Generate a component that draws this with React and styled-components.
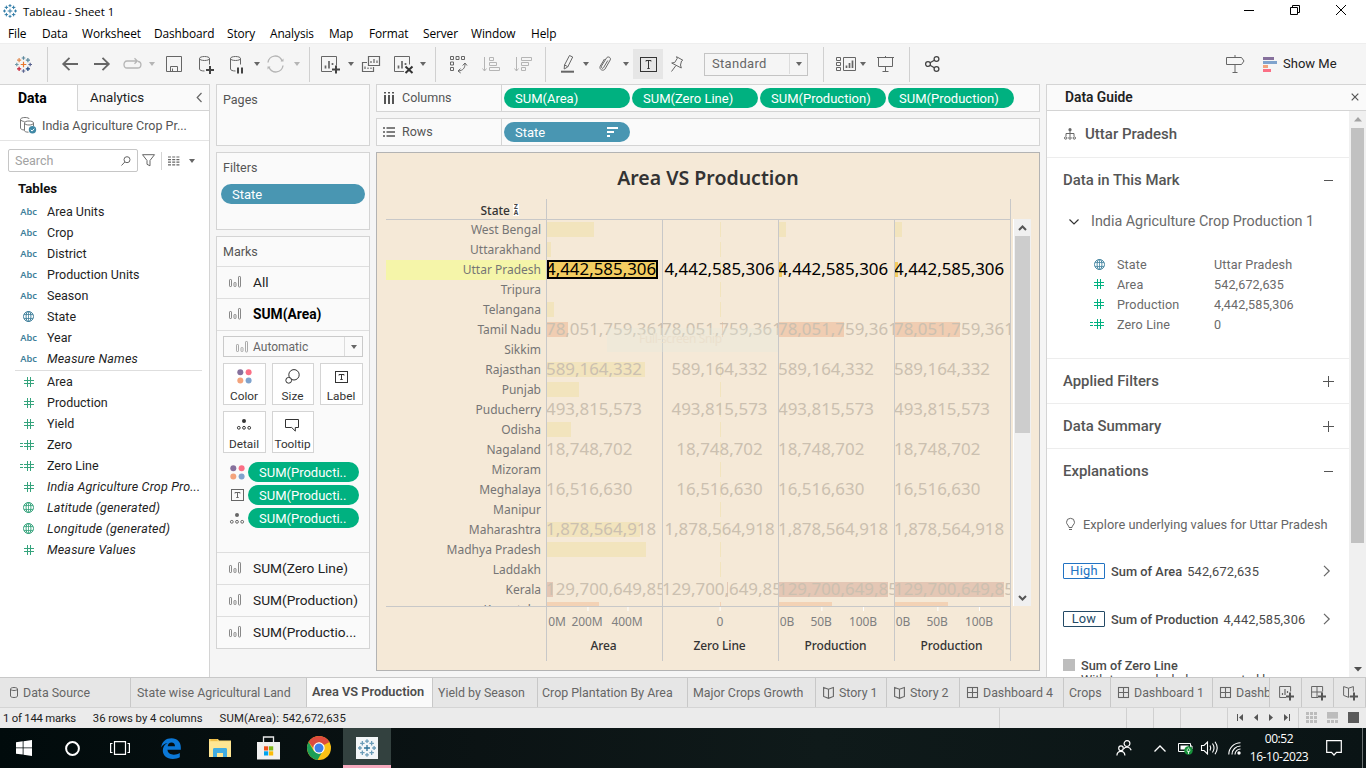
import React from 'react';
import styled, { createGlobalStyle } from 'styled-components';

const Global = createGlobalStyle`
  * { box-sizing: border-box; }
  body { margin: 0; overflow: hidden; background: #f5f5f5; }
  svg { display: block; flex: none; overflow: visible; }
`;

const UI = `Roboto, "Liberation Sans", sans-serif`;
const SYS = `"Open Sans", "Noto Sans", sans-serif`;
const VIZ = `"Noto Sans", "Open Sans", sans-serif`;
const LINE = '#d4d4d4';
const GREEN = '#00b180';
const BLUE = '#4996b2';

const App_ = styled.div`
  width: 1366px; height: 768px; display: flex; flex-direction: column; overflow: hidden;
  font-family: ${UI}; font-size: 12.5px; color: #1e1e1e; white-space: nowrap; cursor: default;
`;

/* ---------- window chrome ---------- */
const TitleBar = styled.div`
  height: 22px; background: #fff; display: flex; align-items: center; padding-left: 3px;
  font: 11.4px ${SYS}; color: #000;
`;
const WindowTitle = styled.span`margin-left: 6px; flex: 1;`;
const WindowButtons = styled.div`display: flex; gap: 36px; padding-right: 20px; margin-top: -2px;`;
const MenuBar = styled.div`
  height: 21px; background: #fff; display: flex; align-items: center; padding: 1px 0 0 8px;
  font: 11.9px ${SYS}; color: #000;
`;
const MenuItem = styled.span`width: ${p => p.$w}px; letter-spacing: ${p => p.$ls || -0.1}px;`;

/* ---------- toolbar ---------- */
const Toolbar = styled.div`
  height: 41px; background: #f5f5f5; border-top: 1px solid #eee; display: flex; align-items: center; flex: none;
`;
const Tool = styled.div`
  margin-left: ${p => p.$ml}px; width: ${p => p.$w}px; flex: none; display: flex; justify-content: center; align-items: center;
  color: ${p => (p.$dim ? '#b5b5b5' : '#666')};
`;
const Divider = styled.div`width: 1px; height: 35px; background: #d0d0d0; margin-left: ${p => p.$ml}px; flex: none;`;
const Caret = styled.div`
  width: 0; height: 0; border: 3px solid transparent; border-top: 4px solid ${p => (p.$dim ? '#b5b5b5' : '#666')};
  border-bottom: 0; margin-left: ${p => p.$ml || 0}px; flex: none;
`;
const ActiveTool = styled.div`
  width: 30px; height: 30px; margin-left: 4px; background: #e6e6e6; display: flex; align-items: center; justify-content: center; color: #333;
`;
const FitSelect = styled.div`
  width: 104px; height: 23px; margin-left: 20px; border: 1px solid #c4c4c4; background: #f5f5f5; display: flex; align-items: center;
  font-size: 13px; color: #666; padding: 0 0 1px 7px; letter-spacing: .3px;
`;
const SelectArrow = styled.div`
  margin-left: auto; width: ${p => p.$w || 18}px; height: 100%; border-left: 1px solid #dcdcdc; display: flex; align-items: center; justify-content: center;
`;
const ShowMe = styled.span`margin-left: 6px; font-size: 13px; color: #222; padding-bottom: 2px;`;

/* ---------- work area ---------- */
const Work = styled.div`height: 593px; display: flex; overflow: hidden; flex: none;`;
const DataPane = styled.div`
  width: 210px; background: #fff; border-right: 1px solid ${LINE}; border-top: 1px solid ${LINE}; flex: none;
`;
const PaneTabs = styled.div`display: flex; height: 26px;`;
const PaneTab = styled.div`
  height: 26px; display: flex; align-items: center; font-size: 14px;
  width: ${p => (p.$active ? 77 : 132)}px; padding-left: ${p => (p.$active ? 18 : 12)}px; padding-right: 7px; justify-content: space-between;
  ${p => (p.$active ? 'font-weight: 700; color: #000;' : `background:#fafafa; border-left: 1px solid ${LINE}; border-bottom: 1px solid ${LINE}; font-size: 13.3px; padding-bottom: 1px;`)}
`;
const Source = styled.div`
  height: 30px; border-bottom: 1px solid #e4e4e4; display: flex; align-items: center; padding: 0 0 1px 20px; gap: 5px; color: #555;
`;
const SearchRow = styled.div`display: flex; align-items: center; padding: 8px 0 0 8px; height: 31px; color: #666;`;
const SearchBox = styled.div`
  width: 130px; height: 23px; border: 1px solid #c6c6c6; border-radius: 2px; display: flex; align-items: center; justify-content: space-between;
  padding: 0 6px 0 6px; color: #a2a2a2; font-size: 12.5px;
`;
const ThinRule = styled.div`width: 1px; height: 18px; background: ${LINE}; margin: 0 6px;`;
const PaneHeading = styled.div`font-weight: 700; font-size: 13.2px; color: #111; padding-left: 18px; height: 29px; line-height: 33px;`;
const Field = styled.div`
  height: 21px; display: flex; align-items: center; ${p => p.$italic && 'font-style: italic; letter-spacing: .18px;'}
`;
const FieldIcon = styled.div`
  width: 47px; padding-right: ${p => p.$pr}px; display: flex; justify-content: flex-end; font: 600 9.3px ${VIZ}; font-style: normal; letter-spacing: 0; color: ${p => p.$c};
`;
const FieldRule = styled.div`height: 1px; background: #dedede; margin: 1px 7px 0 15px;`;

/* ---------- cards ---------- */
const Cards = styled.div`width: 154px; margin-left: 6px; flex: none; display: flex; flex-direction: column; gap: 6px;`;
const Card = styled.div`
  border: 1px solid ${LINE}; background: #fafafa; height: ${p => p.$h}px; display: flex; flex-direction: column; color: #555;
`;
const CardTitle = styled.div`padding-left: 6px; height: 29px; line-height: 30px; flex: none;`;
const Pill = styled.div`
  width: ${p => p.$w}px; height: 20px; border-radius: 10px; background: ${p => p.$c || GREEN}; color: #fff; flex: none;
  display: flex; align-items: center; justify-content: space-between; padding: 0 11px; font-size: ${p => p.$fs || 13}px;
`;
const FilterSlot = styled.div`padding: 2px 4px;`;
const MarkRow = styled.div`
  height: 32px; border-top: 1px solid #dedede; display: flex; align-items: center; padding: 0 0 ${p => (p.$bold ? 2 : 1)}px 12px; gap: 12px; flex: none;
  font-size: ${p => (p.$bold ? 13.8 : 13.7)}px; font-weight: ${p => (p.$bold ? 700 : 400)}; color: ${p => (p.$bold ? '#000' : '#222')};
`;
const MarkBody = styled.div`border-top: 1px solid #dedede; height: 222px; padding: 5px 6px 0; flex: none;`;
const MarkSelect = styled.div`
  width: 140px; height: 21px; border: 1px solid #cacaca; display: flex; align-items: center; padding-left: 12px; gap: 5px; color: #666; font-size: 12px;
`;
const ButtonGrid = styled.div`display: grid; grid-template-columns: 43px 42px 43px; column-gap: 6px; row-gap: 6px; margin-top: 6px;`;
const MarkButton = styled.div`
  height: 42px; border: 1px solid ${LINE}; background: #fff; display: flex; flex-direction: column; align-items: center; justify-content: flex-end;
  font-size: 11.8px; color: #333; padding: 0 1px 0 0; gap: ${p => p.$g || 5}px; line-height: 15px;
`;
const Encodings = styled.div`display: flex; flex-direction: column; gap: 3px; margin-top: 9px;`;
const Encoding = styled.div`display: flex; align-items: center;`;
const EncodingIcon = styled.div`width: 25px; padding-left: 3px; display: flex; justify-content: center; padding-right: 0; color: #666;`;

/* ---------- shelves ---------- */
const Center = styled.div`width: 664px; margin-left: 6px; flex: none; display: flex; flex-direction: column; gap: 6px;`;
const Shelf = styled.div`height: 28px; border: 1px solid ${LINE}; background: #fafafa; display: flex; align-items: center; flex: none;`;
const ShelfLabel = styled.div`
  width: 125px; height: 100%; border-right: 1px solid ${LINE}; display: flex; align-items: center; padding: 0 0 1px 6px; gap: 7px; color: #555; font-size: 12.5px;
`;
const ShelfPills = styled.div`display: flex; gap: 2px; padding-left: 2px;`;

/* ---------- viz ---------- */
const Viz = styled.div`
  position: relative; height: 519px; background: #f5e9d7; border: 1px solid #b3b3b3; font-family: ${VIZ}; padding-left: 9px; flex: none;
`;
const VizTitle = styled.div`height: 46px; line-height: 49px; text-align: center; font-size: 19.5px; font-weight: 600; color: #333; margin-left: -9px;`;
const VizMain = styled.div`display: flex; align-items: flex-start;`;
const Table = styled.div`width: 625px; flex: none;`;
const GRID = '#c8c8c8';
const HeaderRow = styled.div`display: flex; height: 21px; border-bottom: 1px solid ${GRID};`;
const HeaderCell = styled.div`
  width: 160px; display: flex; align-items: center; justify-content: flex-end; padding: 2px 27px 0 0; gap: 3px; font-size: 12px; font-weight: 500; color: #333;
`;
const SortBadge = styled.div`background: #fff; font: 700 6.5px/6px ${VIZ}; width: 6px; text-align: center; color: #444; white-space: normal; padding: 0;`;
const HeaderSpan = styled.div`width: 465px; border-left: 1px solid ${GRID}; border-right: 1px solid ${GRID};`;
const Body = styled.div`height: 386px; overflow: hidden;`;
const Row = styled.div`display: flex; height: 20px;`;
const RowLabel = styled.div`
  width: 160px; text-align: right; padding-right: 5px; font-size: 12px; line-height: 20px; color: #757575; background: ${p => (p.$on ? '#f5f5a9' : 'transparent')};
`;
const Cell = styled.div`
  width: ${p => (p.$last ? 117 : 116)}px; border-left: 1px solid ${GRID}; ${p => p.$last && `border-right: 1px solid ${GRID};`}
  display: grid; overflow: hidden; align-items: center;
  > * { grid-area: 1 / 1; }
`;
const Bar = styled.div`
  height: 15px; background: ${p => p.$c}; margin-top: -1px; justify-self: ${p => (p.$mid ? 'center' : 'start')};
  ${p => p.$sel && 'height: 19px; border: 2px solid #000; margin-top: -1px;'}
`;
const Value = styled.div`
  font-size: 16.9px; line-height: 18px; color: ${p => (p.$on ? '#000' : '#cbc0b0')}; justify-self: ${p => (p.$mid ? 'center' : 'start')};
  margin-left: ${p => (p.$mid ? -6 : -1)}px; margin-right: ${p => (p.$mid ? -4 : 0)}px; margin-top: -2px;
`;
const AxisRow = styled.div`display: flex; height: 55px; border-top: 1px solid ${GRID};`;
const Axis = styled.div`
  position: relative; width: ${p => (p.$last ? 117 : 116)}px; border-left: 1px solid ${GRID}; ${p => p.$last && `border-right: 1px solid ${GRID};`}
  font-size: 12px; font-weight: 500; color: #333; text-align: center; padding: 30px 2px 0 0; line-height: 18px; letter-spacing: -.1px;
`;
const Tick = styled.span`
  position: absolute; top: 0; transform: translateX(-50%); font-weight: 400; color: #808080; padding-top: 6px; font-size: 12px; letter-spacing: -.1px;
  &::before { content: ''; position: absolute; top: 0; left: 50%; width: 1px; height: 4px; background: ${p => (p.$mark ? '#fff' : 'transparent')}; }
`;
const AxisSpacer = styled.div`width: 160px;`;
const VizScroll = styled.div`
  width: 18px; height: 387px; margin: 20px 0 0 2px; border-left: 1px solid #fff; background: #f0f0f0; display: flex; flex-direction: column; justify-content: space-between; align-items: center;
`;
const ScrollEnd = styled.div`height: 17px; display: flex; align-items: center; justify-content: center; flex: none;`;
const Thumb = styled.div`background: ${p => p.$c}; width: ${p => p.$w}px; height: ${p => p.$h}px; margin-bottom: auto;`;
const Ghost = styled.div`
  position: absolute; left: 230px; top: 175px; width: 171px; height: 24px; background: rgba(228, 232, 222, .32); color: #ebe0cd; font-size: 12px; line-height: 22px; padding-left: 32px;
  letter-spacing: -.35px;
`;

/* ---------- data guide ---------- */
const Guide = styled.div`width: 320px; margin-left: 6px; border: 1px solid ${LINE}; border-right: 0; border-bottom: 0; background: #fff; flex: none; color: #555;`;
const GuideHead = styled.div`
  height: 26px; background: #fafafa; border-bottom: 1px solid ${LINE}; display: flex; align-items: center; justify-content: space-between;
  padding: 0 7px 1px 18px; font-size: 13.8px; font-weight: 600; color: #222;
`;
const GuideBody = styled.div`display: flex; height: 567px;`;
const GuideContent = styled.div`width: 302px; height: 567px; overflow: hidden;`;
const GuideScroll = styled.div`width: 17px; background: #f0f0f0; display: flex; flex-direction: column; align-items: center;`;
const MarkName = styled.div`height: 47px; border-bottom: 1px solid #ededed; display: flex; align-items: center; padding-left: 17px; gap: 9px; font-size: 15px; font-weight: 500;`;
const Section = styled.div`
  height: 45px; display: flex; align-items: center; justify-content: space-between; padding: 0 15px 0 16px; font-size: 14.9px; font-weight: 500;
  border-bottom: 1px solid ${p => (p.$open ? 'transparent' : '#ededed')};
`;
const SourceLine = styled.div`display: flex; align-items: center; height: 37px; padding-left: 22px; gap: 12px; font-size: 14.35px; color: #6a6a6a;`;
const Facts = styled.div`padding: 14px 0 0 42px; height: 119px; border-bottom: 1px solid #ededed;`;
const Fact = styled.div`
  display: grid; grid-template-columns: 28px 97px 1fr; height: 20px; align-items: center; color: #6a6a6a; font-size: 12.6px; letter-spacing: .12px;
  > svg { justify-self: start; margin-left: 5px; }
`;
const Explore = styled.div`display: flex; align-items: center; gap: 8px; padding: 7px 0 0 19px; height: 53px; font-size: 12.8px; color: #666;`;
const Explanation = styled.div`
  display: flex; align-items: center; height: 48px; padding: 0 19px 0 16px; font-size: 12.8px; color: #4a4a4a; letter-spacing: .2px;
  b { font-weight: 500; margin: 0 5px 0 6px; letter-spacing: .03px; } svg { margin-left: auto; }
`;
const Badge = styled.div`width: 42px; height: 16px; border: 1px solid ${p => p.$c}; border-radius: 1px; color: ${p => p.$c}; line-height: 14px; text-align: center; font-size: 12.8px;`;
const ZeroLine = styled.div`display: flex; align-items: center; gap: 6px; padding: 15px 0 0 16px; font-size: 12.7px; font-weight: 500; color: #4a4a4a; height: 29px;`;
const Swatch = styled.div`width: 12px; height: 12px; background: #bdbdbd;`;
const Clipped = styled.div`display: flex; justify-content: space-between; padding: 0 20px 0 34px; font-size: 12.6px; color: #4a4a4a; line-height: 15px;`;

/* ---------- bottom ---------- */
const SheetTabs = styled.div`height: 31px; border-top: 1px solid #c8c8c8; border-bottom: 1px solid ${LINE}; background: #e6e6e6; display: flex; flex: none; color: #666;`;
const SheetTab = styled.div`
  width: ${p => p.$w}px; border-right: 1px solid #c8c8c8; display: flex; align-items: center; padding-left: ${p => p.$pl || 6}px; gap: 5px; overflow: hidden; flex: none;
  font-size: ${p => p.$fs || 12.4}px; ${p => p.$on && 'background: #fafafa; font-weight: 600; font-size: 12.8px; color: #4d4d4d; padding-bottom: 2px;'}
`;
const StatusBar = styled.div`height: 20px; background: #ebebeb; display: flex; align-items: center; padding-left: 3px; font-size: 11.3px; color: #222; gap: 17px; flex: none;`;
const StatusText = styled.span`letter-spacing: ${p => p.$ls}px;`;
const StatusCells = styled.div`margin-left: auto; display: flex; height: 100%;`;
const StatusCell = styled.div`width: ${p => p.$w}px; border-left: 1px solid #d0d0d0; display: flex; align-items: center; justify-content: center; gap: ${p => p.$g || 0}px; color: #555; padding-bottom: 1px;`;
const TaskBar = styled.div`
  height: 40px; background: linear-gradient(90deg, #010b0c, #0b1314 35%, #0f1a1a 60%, #0a1415); display: flex; align-items: center; color: #fff; flex: none;
`;
const Task = styled.div`
  width: ${p => p.$w || 49}px; height: 40px; display: flex; align-items: center; justify-content: center;
  ${p => p.$on && 'background: #33413f; border-bottom: 3px solid #f5a9bd; padding-top: 2px;'}
`;
const Tray = styled.div`margin-left: auto; display: flex; align-items: center; height: 40px;`;
const Clock = styled.div`width: 62px; font: 12px/18px ${SYS}; letter-spacing: -.4px; text-align: center; margin-left: 7px;`;
const TrayIcon = styled.div`margin-left: ${p => p.$ml}px;`;
const PeekLine = styled.div`width: 1px; height: 40px; background: #6b7272; margin: 0 3px 0 20px;`;

/* ---------- icons ---------- */
const Ico = ({ w = 16, h = w, sw = 1, children, ...r }) => (
  <svg width={w} height={h} viewBox={`0 0 ${w} ${h}`} fill="none" stroke="currentColor" strokeWidth={sw} {...r}>{children}</svg>
);
const plus = (x, y, s) => `M${x - s} ${y}h${2 * s}M${x} ${y - s}v${2 * s}`;
const Logo = ({ size, colors }) => {
  const c = colors || Array(9).fill('#2f7ba6');
  const pts = [[8.5, 8.5, 2.8], [8.5, 2, 1.8], [8.5, 15, 1.8], [1.8, 8.5, 1.8], [15.2, 8.5, 1.8], [4.1, 4.1, 2.1], [12.9, 4.1, 2.1], [4.1, 12.9, 2.1], [12.9, 12.9, 2.1]];
  return (
    <svg width={size} height={size} viewBox="0 0 17 17" fill="none" strokeWidth="1.2">
      {pts.map(([x, y, s], i) => <path key={i} d={plus(x, y, s)} stroke={c[i]} />)}
    </svg>
  );
};
const brand = ['#e8762d', '#5b879b', '#5b6591', '#7099a6', '#5b6591', '#e08a50', '#59879b', '#c72035', '#1f447e'];
const Globe = ({ c }) => (
  <Ico w={11} stroke={c}><circle cx="5.5" cy="5.5" r="5" /><ellipse cx="5.5" cy="5.5" rx="2.4" ry="5" /><path d="M1 3.5h9M1 7.5h9M5.5 .5v10" strokeWidth=".8" /></Ico>
);
const Hash = ({ c, calc }) => (
  <Ico w={calc ? 14 : 10} h={10} stroke={c}><g transform={calc ? 'translate(4 0)' : ''}><path d="M3.5 0v10M6.5 0v10M0 3.5h10M0 6.5h10" /></g>{calc && <path d="M0 3.5h3M0 6.5h3" />}</Ico>
);
const Bars = ({ c = '#888' }) => (
  <Ico w={12} h={12} stroke={c}><rect x=".5" y="3.5" width="2" height="7" rx=".6" /><rect x="5" y="6.5" width="2" height="4" rx=".6" /><rect x="9.5" y=".5" width="2" height="10.5" rx=".6" /></Ico>
);
const Dots4 = () => (
  <Ico w={15} h={15} stroke="none"><circle cx="3.3" cy="3.3" r="3" fill="#86709c" /><circle cx="11.6" cy="3.3" r="3" fill="#fb6f85" /><circle cx="3.3" cy="11.6" r="3" fill="#f3a37c" /><circle cx="11.6" cy="11.6" r="3" fill="#7fa3cd" /></Ico>
);
const TBox = ({ w = 13, h = 12 }) => (
  <Ico w={w} h={h}><rect x=".5" y=".5" width={w - 1} height={h - 1} /><path d={`M${w / 2 - 2.5} 4.5V3.5h5v1M${w / 2} 3.5v${h - 7}M${w / 2 - 1.2} ${h - 3.5}h2.4`} /></Ico>
);
const DetailIcon = () => (
  <Ico w={14} h={11}><circle cx="7" cy="2" r="2" fill="currentColor" stroke="none" /><circle cx="1.8" cy="8.8" r="1.4" /><circle cx="7" cy="8.8" r="1.4" /><circle cx="12.2" cy="8.8" r="1.4" /></Ico>
);
const SizeIcon = () => <Ico w={15} h={15}><circle cx="9" cy="5.8" r="5.2" /><circle cx="3.7" cy="11.3" r="2.9" fill="#fff" /></Ico>;
const TipIcon = () => <Ico w={15} h={13}><path d="M.5.5h13v8h-3.2v3.6L6.7 8.5H.5z" /></Ico>;
const Cyl = 'M.5 2.5v10.5c0 1.2 2 2 5 2M.5 2.5c0-1.2 2.2-2 5-2s5 .8 5 2-2.2 2-5 2-5-.8-5-2M10.5 2.5v6';
const BookIcon = () => <Ico w={11} h={12} stroke="#666" sw={1.1}><path d="M5.5 2.2L.6.6v8.8l4.9 1.9 4.9-1.9V.6zM5.5 2.2v9" /></Ico>;
const GridIcon = () => <Ico w={11} h={11} stroke="#666" sw={1.1}><rect x=".5" y=".5" width="10" height="10" /><path d="M5.5.5v10M.5 5.5h10" /></Ico>;
const Chevron = ({ d, w = 7, h = 11, c = '#666' }) => <Ico w={w} h={h} stroke={c} sw={1.2}><path d={d} /></Ico>;
const Person = () => <Ico w={16} h={16} stroke="#fff" sw={1.2}><circle cx="11" cy="3.600" r="2.900" /><circle cx="5" cy="8.200" r="2.300" /><path d="M8 8.800c1.200-2.400 6-2.200 7.200 1.400M.9 15.500c.4-5.400 7.600-5.400 8 0" /></Ico>;

/* ---------- data ---------- */
const menus = [['File', 34], ['Data', 40], ['Worksheet', 72], ['Dashboard', 73], ['Story', 43], ['Analysis', 59], ['Map', 40], ['Format', 54], ['Server', 48], ['Window', 60], ['Help', 40]];
const teal = '#3f7f9b', grn = '#35a37c';
const dims = [['Area Units'], ['Crop'], ['District'], ['Production Units'], ['Season'], ['State', 'globe'], ['Year'], ['Measure Names', '', true]];
const meas = [['Area'], ['Production'], ['Yield'], ['Zero', 'calc'], ['Zero Line', 'calc'], ['India Agriculture Crop Pro...', '', true], ['Latitude (generated)', 'globe', true], ['Longitude (generated)', 'globe', true], ['Measure Values', '', true]];
const Y = '#f2e4bd', S = '#f0cdb2', D = '#e4c7b5', O = '#f3d2b5';
const states = [
  ['West Bengal', '', 47, 7, Y], ['Uttarakhand', '', 4, 0, Y], ['Uttar Pradesh', '4,442,585,306', 111, 3, '#f3cd62'], ['Tripura', '', 0, 0, Y],
  ['Telangana', '', 7, 0, Y], ['Tamil Nadu', '78,051,759,361', 21, 65, S], ['Sikkim', '', 0, 0, 'transparent'], ['Rajasthan', '589,164,332', 98, 0, Y],
  ['Punjab', '', 32, 0, Y], ['Puducherry', '493,815,573', 0, 0, Y], ['Odisha', '', 24, 0, Y], ['Nagaland', '18,748,702', 0, 0, Y],
  ['Mizoram', '', 0, 0, Y], ['Meghalaya', '16,516,630', 0, 0, Y], ['Manipur', '', 0, 0, Y], ['Maharashtra', '1,878,564,918', 93, 0, Y],
  ['Madhya Pradesh', '', 99, 0, Y], ['Laddakh', '', 0, 0, Y], ['Kerala', '129,700,649,851', 6, 109, D], ['Karnataka', '', 52, 53, O],
];
const axes = [
  ['Area', [['0M', 10], ['200M', 40, 1], ['400M', 80, 1]]],
  ['Zero Line', [['0', 57, 1]]],
  ['Production', [['0B', 8], ['50B', 42, 1], ['100B', 84, 1]]],
  ['Production', [['0B', 8], ['50B', 42, 1], ['100B', 84, 1]]],
];

function FieldRow({ f, color, letters }) {
  const [name, kind, italic] = f;
  const calc = kind === 'calc';
  return (
    <Field $italic={italic}>
      <FieldIcon $c={color} $pr={kind === 'globe' ? 13 : letters ? 10 : 13}>
        {kind === 'globe' ? <Globe c={color} /> : letters ? 'Abc' : <Hash c={color} calc={calc} />}
      </FieldIcon>
      {name}
    </Field>
  );
}

function MainToolbar() {
  return (
    <Toolbar>
      <Tool $ml={15} $w={17}><Logo size={17} colors={brand} /></Tool>
      <Divider $ml={15} />
      <Tool $ml={13} $w={17}><Ico w={16} h={14} sw={1.8}><path d="M16 7H1.5M7.5 .8L1.2 7l6.3 6.2" /></Ico></Tool>
      <Tool $ml={15} $w={17}><Ico w={16} h={14} sw={1.8}><path d="M0 7h14.5M8.5.8L14.8 7l-6.3 6.2" /></Ico></Tool>
      <Tool $ml={13} $w={19} $dim><Ico w={19} h={12} sw={1.3}><path d="M4 3C0 3 0 10 4 10h10.5c4.5 0 4.5-6.5.5-6.5M4 3h10M11.5.3L14.3 3l-2.8 2.7" /></Ico></Tool>
      <Caret $ml={7} $dim />
      <Tool $ml={11} $w={16}><Ico w={16}><path d="M.5.5h15v15H.5zM4.500 15.500v-5h7v5M6.500 15v-2.500" /></Ico></Tool>
      <Tool $ml={17} $w={15}><Ico w={15} h={17}><path d={Cyl} /><path d="M7 14h8M11 10v8" strokeWidth="2" stroke="#444" /></Ico></Tool>
      <Tool $ml={15} $w={15}><Ico w={13} h={17}><path d={Cyl} /><path d="M8 11.500v6M12 11.500v6" strokeWidth="2" stroke="#444" /></Ico></Tool>
      <Caret $ml={10} />
      <Tool $ml={7} $w={17} $dim><Ico w={17} h={16} sw={1.4}><path d="M1 6.500A7.200 7.200 0 0 1 15 5M16 9.500A7.200 7.200 0 0 1 2 11" /><path d="M13.500 5.500h3V2.500zM3.500 10.500h-3v3z" fill="currentColor" stroke="none" /></Ico></Tool>
      <Caret $ml={10} $dim />
      <Divider $ml={9} />
      <Tool $ml={11} $w={19}><Ico w={19} h={18}><path d="M11 16.500H.5V1.500h15v9" /><path d="M4.500 13.500v-3M8 13.500V6M11.500 10V8" strokeWidth="1.700" /><path d="M11 14.500h8M15 10.500v8" strokeWidth="2" stroke="#444" /></Ico></Tool>
      <Caret $ml={8} />
      <Tool $ml={8} $w={18}><Ico w={18} h={16}><path d="M6.500.500h11v9h-11zM5 6.500H.500v9h11V11M9 7V5M12 7V3M15 7V4.500M3 13v-2.500M6 13v-1.500M9 13v-1.500" strokeWidth="1.200" /></Ico></Tool>
      <Tool $ml={14} $w={19}><Ico w={19} h={18}><path d="M10 16.500H.5V1.500h15v8" /><path d="M4.500 13.500v-3M8 13.500V6M11.500 10V8" strokeWidth="1.700" /><path d="M11.500 11.500l7 6.500M18.500 11.500l-7 6.500" strokeWidth="2" stroke="#333" /></Ico></Tool>
      <Caret $ml={7} />
      <Divider $ml={9} />
      <Tool $ml={13} $w={18}><Ico w={17} h={17}><path d="M.5.5h3v3h-3zM6 .5h3v3H6zM11.500.500h3v3h-3zM.5 6h3v3h-3zM.5 11.500h3v3h-3zM15 8c0 4-2 6.500-6.500 7M12.700 9.500L15 7l2 2.500M10.500 12.700L8 15l2.700 2" /></Ico></Tool>
      <Tool $ml={15} $w={18} $dim><Ico w={18} h={15}><path d="M2.500 0v14M.5 11.500l2 2.500 2-2.500M7.500.5h4v3h-4zM7.500 5.500h7v3h-7zM7.500 10.500h10v3h-10z" /></Ico></Tool>
      <Tool $ml={14} $w={18} $dim><Ico w={18} h={15}><path d="M2.500 0v14M.5 11.500l2 2.500 2-2.500M7.500.5h10v3h-10zM7.500 5.500h7v3h-7zM7.500 10.500h4v3h-4z" /></Ico></Tool>
      <Divider $ml={13} />
      <Tool $ml={15} $w={14}><Ico w={14} h={18}><path d="M0 16.700h13" strokeWidth="2" /><path d="M8.500.500l3.200 1.500-5 10-3.500 2 .3-4zM3.400 10l3.200 1.500" /></Ico></Tool>
      <Caret $ml={8} />
      <Tool $ml={9} $w={14}><Ico w={13} h={16}><path d="M8.800 4.500L4.500 11.700c-.9 1.500-3-.1-2-1.700l5-8c1.300-2.200 5-.5 3.700 2L6 13c-1.500 2.600-6.300.6-4.800-2.800L5.500 3" /></Ico></Tool>
      <Caret $ml={11} />
      <ActiveTool><TBox w={17} h={15} /></ActiveTool>
      <Tool $ml={6} $w={15}><Ico w={14} h={16}><path d="M6.500.7l6.300 3.500-1.300.8-1 4 .8 3L1.700 7l3-.5 2.500-4zM5.800 9.700L1.500 15.500" /></Ico></Tool>
      <FitSelect>Standard<SelectArrow><Caret /></SelectArrow></FitSelect>
      <Divider $ml={15} />
      <Tool $ml={12} $w={20}><Ico w={20} h={15}><path d="M.5.500h4v3h-4zM.5 5.500h4v3h-4zM.5 10.500h4v3h-4zM7.500.500h12v13h-12z" /><path d="M10.500 11V8.500M13.500 11V6M16.500 11V3.500" strokeWidth="1.700" /></Ico></Tool>
      <Caret $ml={4} />
      <Tool $ml={11} $w={17}><Ico w={17} h={16}><path d="M0 1.500h17M1.500 1.500v9h14v-9M8.500 10.500v5M5.500 15.500h6M8.500 0v1.500" /></Ico></Tool>
      <Divider $ml={15} />
      <Tool $ml={14} $w={16}><Ico w={15} h={16} sw={1.3} stroke="#444"><circle cx="3" cy="8" r="2.400" /><circle cx="11.500" cy="3" r="2.400" /><circle cx="11.500" cy="13" r="2.400" /><path d="M5 6.800l4.400-2.600M5 9.200l4.400 2.600" /></Ico></Tool>
      <Tool $ml={286} $w={19}><Ico w={19} h={18}><path d="M.5 2.500h15l2.500 3.500-2.500 3.500H.5zM9 0v2.500M9 9.500v8M6.500 17.500h5" /></Ico></Tool>
      <Tool $ml={18} $w={14}><Ico w={14} h={15} stroke="none"><path d="M0 0h11v3H0z" fill="#86709c" /><path d="M0 4h14v3H0z" fill="#7fa3cd" /><path d="M0 8h5v3H0z" fill="#f3a37c" /><path d="M0 12h8v3H0z" fill="#fb6f85" /></Ico></Tool>
      <ShowMe>Show Me</ShowMe>
    </Toolbar>
  );
}

function LeftPane() {
  return (
    <DataPane>
      <PaneTabs>
        <PaneTab $active>Data</PaneTab>
        <PaneTab>Analytics<Chevron d="M5.500 1L1.200 5.500 5.500 10" w={6} /></PaneTab>
      </PaneTabs>
      <Source>
        <Ico w={17} h={17} stroke="#777"><path d="M4.500 13C2 13 .5 12 .5 11V2.500C.5 1.200 2.500.500 5 .500s4 .7 4.500 1.500M.5 2.500C.7 3.700 3 4.500 4.500 4.500" /><path d="M4.500 6v7.500c0 1 1.500 1.700 4 1.700M4.500 6c0-1.300 2-2 4.500-2s4.500.7 4.500 2-2 2-4.500 2-4.500-.7-4.500-2M13.500 6v3" /><circle cx="12.500" cy="12.800" r="3.700" fill="#3f88a5" stroke="none" /><path d="M10.800 12.800l1.300 1.300 2.200-2.400" stroke="#fff" /></Ico>
        India Agriculture Crop Pr...
      </Source>
      <SearchRow>
        <SearchBox>Search<Ico w={10} h={10} stroke="#666"><circle cx="6" cy="3.700" r="3" /><path d="M3.800 6L.5 9.500" /></Ico></SearchBox>
        <Tool $ml={3} $w={14}><Ico w={13} h={13}><path d="M.5.700h12L8 6.500v5.300l-3-1.500V6.500z" /></Ico></Tool>
        <ThinRule />
        <Ico w={12} h={10}><path d="M0 1h12M0 3.600h12M0 6.200h12M0 8.800h12" strokeDasharray="3 1.200 3 1.200" strokeWidth="1.200" /></Ico>
        <Caret $ml={9} />
      </SearchRow>
      <PaneHeading>Tables</PaneHeading>
      {dims.map(f => <FieldRow key={f[0]} f={f} color={teal} letters />)}
      <FieldRule />
      {meas.map(f => <FieldRow key={f[0]} f={f} color={grn} />)}
    </DataPane>
  );
}

function MarksCard() {
  return (
    <Card $h={413}>
      <CardTitle>Marks</CardTitle>
      <MarkRow><Bars />All</MarkRow>
      <MarkRow $bold><Bars />SUM(Area)</MarkRow>
      <MarkBody>
        <MarkSelect><Bars c="#aaa" />Automatic<SelectArrow><Caret /></SelectArrow></MarkSelect>
        <ButtonGrid>
          <MarkButton><Dots4 />Color</MarkButton>
          <MarkButton><SizeIcon />Size</MarkButton>
          <MarkButton $g={6}><TBox />Label</MarkButton>
          <MarkButton $g={7}><DetailIcon />Detail</MarkButton>
          <MarkButton $g={5}><TipIcon />Tooltip</MarkButton>
        </ButtonGrid>
        <Encodings>
          {[<Dots4 />, <TBox />, <DetailIcon />].map((icon, i) => (
            <Encoding key={i}><EncodingIcon>{icon}</EncodingIcon><Pill $w={111}>SUM(Producti..</Pill></Encoding>
          ))}
        </Encodings>
      </MarkBody>
      {['SUM(Zero Line)', 'SUM(Production)', 'SUM(Productio...'].map(t => <MarkRow key={t}><Bars />{t}</MarkRow>)}
    </Card>
  );
}

function Worksheet() {
  return (
    <Viz>
      <VizTitle>Area VS Production</VizTitle>
      <VizMain>
        <Table>
          <HeaderRow><HeaderCell>State<SortBadge>Z A</SortBadge></HeaderCell><HeaderSpan /></HeaderRow>
          <Body>
            {states.map(([name, value, area, prod, color]) => {
              const on = name === 'Uttar Pradesh';
              return (
                <Row key={name}>
                  <RowLabel $on={on}>{name}</RowLabel>
                  <Cell><Bar $c={color} $sel={on} style={{ width: area }} /><Value $on={on}>{value}</Value></Cell>
                  <Cell><Bar $c={on ? '#f3dc9a' : color} $mid style={{ width: 1 }} /><Value $on={on} $mid={value.length < 14}>{value}</Value></Cell>
                  <Cell><Bar $c={color} style={{ width: prod }} /><Value $on={on}>{value}</Value></Cell>
                  <Cell $last><Bar $c={color} style={{ width: prod }} /><Value $on={on}>{value}</Value></Cell>
                </Row>
              );
            })}
          </Body>
          <AxisRow>
            <AxisSpacer />
            {axes.map(([title, ticks], i) => (
              <Axis key={i} $last={i === 3}>
                {ticks.map(([t, x, mark]) => <Tick key={t} $mark={mark} style={{ left: x }}>{t}</Tick>)}
                {title}
              </Axis>
            ))}
          </AxisRow>
        </Table>
        <VizScroll>
          <ScrollEnd><Ico w={9} h={6} stroke="#555" sw={2}><path d="M1 5l3.500-3.500L8 5" /></Ico></ScrollEnd>
          <Thumb $c="#cdcdcd" $w={15} $h={197} />
          <ScrollEnd><Ico w={9} h={6} stroke="#555" sw={2}><path d="M1 1l3.500 3.500L8 1" /></Ico></ScrollEnd>
        </VizScroll>
      </VizMain>
      <Ghost>Full-screen Snip</Ghost>
    </Viz>
  );
}

const Minus = () => <Ico w={11} h={11}><path d="M1 5.500h9" /></Ico>;
const Plus = () => <Ico w={11} h={11}><path d="M0 5.500h11M5.500 0v11" /></Ico>;
const Next = () => <Chevron d="M1 .8L6.200 6 1 11.200" w={7} h={12} />;

function DataGuide() {
  const g = '#00b180';
  return (
    <Guide>
      <GuideHead>Data Guide<Ico w={8} h={8} stroke="#555" sw={1.200}><path d="M.7.700l6.600 6.600M7.300.700L.7 7.300" /></Ico></GuideHead>
      <GuideBody>
        <GuideContent>
          <MarkName><Ico w={12} h={12} stroke="#666"><circle cx="6" cy="1.700" r="1.600" fill="#666" stroke="none" /><path d="M6 3v5M2 8V5.500h8V8" /><circle cx="1.700" cy="10" r="1.200" /><circle cx="6" cy="10" r="1.200" /><circle cx="10.300" cy="10" r="1.200" /></Ico>Uttar Pradesh</MarkName>
          <Section $open>Data in This Mark<Minus /></Section>
          <SourceLine><Ico w={10} h={6} stroke="#333" sw={1.200}><path d="M.5.500L5 5 9.500.500" /></Ico>India Agriculture Crop Production 1</SourceLine>
          <Facts>
            <Fact><Globe c="#4687a2" /><span>State</span><span>Uttar Pradesh</span></Fact>
            <Fact><Hash c={g} /><span>Area</span><span>542,672,635</span></Fact>
            <Fact><Hash c={g} /><span>Production</span><span>4,442,585,306</span></Fact>
            <Fact><CalcHash /><span>Zero Line</span><span>0</span></Fact>
          </Facts>
          <Section>Applied Filters<Plus /></Section>
          <Section>Data Summary<Plus /></Section>
          <Section $open>Explanations<Minus /></Section>
          <Explore><Ico w={9} h={12} stroke="#666"><path d="M3 9.500C3 7.500.5 6.500.5 4.300a4 4 0 0 1 8 0C8.500 6.500 6 7.500 6 9.500zM3 11.500h3" /></Ico>Explore underlying values for Uttar Pradesh</Explore>
          <Explanation><Badge $c="#2273c3">High</Badge><b>Sum of Area</b>542,672,635<Next /></Explanation>
          <Explanation><Badge $c="#244a66">Low</Badge><b>Sum of Production</b>4,442,585,306<Next /></Explanation>
          <ZeroLine><Swatch />Sum of Zero Line</ZeroLine>
          <Clipped>With two marks below expected here<span>›</span></Clipped>
        </GuideContent>
        <GuideScroll>
          <ScrollEnd><Ico w={8} h={5} stroke="none" fill="#a3a3a3"><path d="M4 0l4 4.500H0z" /></Ico></ScrollEnd>
          <Thumb $c="#c1c1c1" $w={13} $h={415} />
          <ScrollEnd><Ico w={8} h={5} stroke="none"><path d="M4 4.500L0 0h8z" fill="#505050" /></Ico></ScrollEnd>
        </GuideScroll>
      </GuideBody>
    </Guide>
  );
}
const CalcShift = styled.div`margin-left: 1px;`;
function CalcHash() { return <CalcShift><Hash c="#00b180" calc /></CalcShift>; }

const AddMark = () => <path d="M7 11.500h8M11 7.500v8" strokeWidth="2" stroke="#555" />;

function Bottom() {
  const sub = 'M.6 1.500h11v5M7 12.500H.6V1.500';
  return (
    <>
      <SheetTabs>
        <SheetTab $w={131} $pl={10}><Ico w={8} h={11}><path d="M.5 2v7c0 2 7 2 7 0V2c0-2-7-2-7 0s7 2 7 0" /></Ico>Data Source</SheetTab>
        <SheetTab $w={176}>State wise Agricultural Land</SheetTab>
        <SheetTab $w={126} $pl={5} $on>Area VS Production</SheetTab>
        <SheetTab $w={105} $pl={5}>Yield by Season</SheetTab>
        <SheetTab $w={150} $pl={4}>Crop Plantation By Area</SheetTab>
        <SheetTab $w={128} $pl={5}>Major Crops Growth</SheetTab>
        <SheetTab $w={71} $pl={7}><BookIcon />Story 1</SheetTab>
        <SheetTab $w={73} $pl={7}><BookIcon />Story 2</SheetTab>
        <SheetTab $w={104} $pl={7}><GridIcon />Dashboard 4</SheetTab>
        <SheetTab $w={47} $pl={5}>Crops</SheetTab>
        <SheetTab $w={102} $pl={7}><GridIcon />Dashboard 1</SheetTab>
        <SheetTab $w={57} $pl={7}><GridIcon />Dashboard 2</SheetTab>
        <SheetTab $w={32} $pl={9}><Ico w={15} h={15}><path d={sub} /><path d="M3.500 10V8M6 10V4M8.500 8V6" strokeWidth="1.200" /><AddMark /></Ico></SheetTab>
        <SheetTab $w={32} $pl={9}><Ico w={15} h={15}><path d="M.6 1.500h11v5M7 12.500H.6V1.500M6 1.500v11M.6 7h11" /><AddMark /></Ico></SheetTab>
        <SheetTab $w={32} $pl={9}><Ico w={15} h={15}><path d="M5.500 3.200L.6 1.600v8.800l4.900 1.900 1-.5M5.500 3.200l4.900-1.600v5M5.500 3.200v9" /><AddMark /></Ico></SheetTab>
      </SheetTabs>
      <StatusBar>
        <StatusText $ls={-0.2}>1 of 144 marks</StatusText><StatusText $ls={0}>36 rows by 4 columns</StatusText><StatusText $ls={0.2}>SUM(Area): 542,672,635</StatusText>
        <StatusCells>
          <StatusCell $w={127} /><StatusCell $w={27} /><StatusCell $w={27} /><StatusCell $w={47} />
          <StatusCell $w={71} $g={11}>
            <Ico w={6} h={7} stroke="none"><path d="M0 0h1v7H0zM6 0v7L2 3.500z" fill="#555" /></Ico>
            <Ico w={4} h={7} stroke="none"><path d="M4 0v7L0 3.500z" fill="#555" /></Ico>
            <Ico w={4} h={7} stroke="none"><path d="M0 0v7l4-3.500z" fill="#555" /></Ico>
            <Ico w={6} h={7} stroke="none"><path d="M5 0h1v7H5zM0 0v7l4-3.500z" fill="#555" /></Ico>
          </StatusCell>
          <StatusCell $w={68} $g={10}>
            <Ico w={11} h={11} stroke="#bcbcbc" sw={3}><path d="M0 1.500h11M0 5.500h11M0 9.500h11" strokeDasharray="3 1" /></Ico>
            <Ico w={11} h={11} stroke="#bcbcbc" sw={3}><path d="M0 3.300h11" strokeWidth="6.600" /><path d="M0 9.500h11" strokeDasharray="3 1" /></Ico>
            <Ico w={11} h={11} stroke="none"><path d="M0 0h11v11H0z" fill="#5a5a5a" /></Ico>
          </StatusCell>
        </StatusCells>
      </StatusBar>
      <TaskBar>
        <Task $w={48}><Ico w={16} h={16} stroke="none"><path d="M0 2.300l6.700-1v6.200H0zM7.500 1.200L16 0v7.500H7.500zM0 8.300h6.700v6.300L0 13.700zM7.500 8.300H16V16l-8.500-1.200z" fill="#fff" /></Ico></Task>
        <Task $w={48}><Ico w={15} h={15} stroke="#fff" sw={2}><circle cx="7.500" cy="7.500" r="6.400" /></Ico></Task>
        <Task $w={48}><Ico w={20} h={14} stroke="#fff" sw={1.200}><path d="M4.500.700h11v12.600h-11zM2.500 2.500H.600v9h1.900M17.500 2.500h1.900v9h-1.900" /></Ico></Task>
        <Task $w={54}><Ico w={20} h={21} stroke="none"><path d="M.2 9.500C.8 3.500 5 .2 10.500.2c6 0 9.300 4.200 9.300 9v2.600H6.500c.2 3.300 3.200 4.900 6.300 4.900 2.300 0 4.200-.6 6-1.700v4.300c-2 1.100-4.400 1.600-7 1.600C5.500 20.900 1.800 17 1.800 12.400c0-3.300 1.700-6 4.800-7.500C3.700 5.200 1.500 7 .2 9.500zM6.700 8.300H14C14 5.900 12.700 4.400 10.500 4.400S7 6 6.700 8.300z" fill="#0b78d7" /></Ico></Task>
        <Task $w={44}><Ico w={22} h={20} stroke="none"><path d="M0 1h9l1 1.500h12V19H0z" fill="#fbd976" /><path d="M0 3.500h22V19H0z" fill="#ffe693" /><path d="M1.500 1.500h7v1h-7z" fill="#e3a21a" /><path d="M4 19v-7.500c0-1 .5-1.500 1.500-1.500h11c1 0 1.500.5 1.500 1.500V19h-4v-4H8v4z" fill="#42ade2" /></Ico></Task>
        <Task $w={53}><Ico w={23} h={24} stroke="none"><path d="M6.500 6V1h10v5" stroke="#e9e9e9" strokeWidth="1.300" /><path d="M0 6h23v17.500H0z" fill="#f1f1f1" /><path d="M7 10.300h4.200v4.200H7z" fill="#f1511b" /><path d="M12 10.300h4.200v4.200H12z" fill="#80b918" /><path d="M7 15.300h4.200v4.200H7z" fill="#00a4ef" /><path d="M12 15.300h4.200v4.200H12z" fill="#fbbc09" /></Ico></Task>
        <Task $w={48}><Ico w={24} h={24} stroke="none"><circle cx="12" cy="12" r="12" fill="#fbc116" /><path d="M1.600 6A12 12 0 0 1 22.400 6H12L8 14z" fill="#dd4b3e" /><path d="M1.600 6A12 12 0 0 0 10.500 23.900L15.800 15 12 18 6.800 15z" fill="#1c9e57" /><path d="M22.400 6H12l5 3z" fill="#dd4b3e" /><circle cx="12" cy="12" r="5.700" fill="#fff" /><circle cx="12" cy="12" r="4.500" fill="#3f7fe8" /></Ico></Task>
        <Task $w={48} $on><Ico w={22} h={22} stroke="none"><path d="M0 0h22v22H0z" fill="#f3f6f8" /><g transform="translate(2 2)"><Logo size={18} colors={['#2a6f96', ...Array(8).fill('#6a9cb8')]} /></g></Ico></Task>
        <Tray>
          <Person />
          <TrayIcon $ml={22}><Ico w={12} h={7} stroke="#fff" sw={1.300}><path d="M.5 6.500L6 1l5.500 5.500" /></Ico></TrayIcon>
          <TrayIcon $ml={12}><Ico w={15} h={13} stroke="#fff"><path d="M.5 1.500h12v8H.5zM12.500 4h1.500v3h-1.500" /><path d="M2.500 3.500h8v4h-8z" fill="#fff" stroke="none" /><circle cx="10.500" cy="8.500" r="4.300" fill="#17913a" stroke="none" /><path d="M10.500 6c-2 1.500-1.500 4 0 4s2-2.500 0-4M10.500 9v3" strokeWidth=".8" /></Ico></TrayIcon>
          <TrayIcon $ml={8}><Ico w={17} h={14} stroke="#fff" sw={1.100}><path d="M.5 4.500H3L6.500 1v12L3 9.500H.5zM9 4.500q1.500 2.500 0 5M11.500 2.500q3 4.500 0 9M14 .8q4.400 6.200 0 12.400" /></Ico></TrayIcon>
          <TrayIcon $ml={10}><Ico w={13} h={13} stroke="#fff" sw={1.100}><path d="M.8 12.500A11.700 11.700 0 0 1 12.500.8M4 12.500A8.500 8.500 0 0 1 12.500 4M7 12.500A5.500 5.500 0 0 1 12.500 7" /><circle cx="11" cy="11" r="1.700" fill="#fff" stroke="none" /></Ico></TrayIcon>
          <Clock>00:52<br />16-10-2023</Clock>
          <TrayIcon $ml={16}><Ico w={16} h={16} stroke="#fff" sw={1.200}><path d="M.7.700h14.600v11.600H10.500L8 15l-2.500-2.700H.7z" /></Ico></TrayIcon>
          <PeekLine />
        </Tray>
      </TaskBar>
    </>
  );
}

export default function App() {
  return (
    <App_>
      <Global />
      <TitleBar>
        <Logo size={14} />
        <WindowTitle>Tableau - Sheet 1</WindowTitle>
        <WindowButtons>
          <Ico w={10} h={10} stroke="#000"><path d="M0 5.500h10" /></Ico>
          <Ico w={10} h={10} stroke="#000"><path d="M.5 2.500h7v7h-7zM2.500 2.500v-2h7v7h-2" /></Ico>
          <Ico w={10} h={10} stroke="#000"><path d="M0 0l10 10M10 0L0 10" /></Ico>
        </WindowButtons>
      </TitleBar>
      <MenuBar>{menus.map(([m, w]) => <MenuItem key={m} $w={w}>{m}</MenuItem>)}</MenuBar>
      <MainToolbar />
      <Work>
        <LeftPane />
        <Cards>
          <Card $h={62}><CardTitle>Pages</CardTitle></Card>
          <Card $h={78}><CardTitle>Filters</CardTitle><FilterSlot><Pill $w={144} $c={BLUE}>State</Pill></FilterSlot></Card>
          <MarksCard />
        </Cards>
        <Center>
          <Shelf>
            <ShelfLabel><Ico w={12} h={12} sw={2} stroke="#555"><path d="M2 0v1.500M6 0v1.500M10 0v1.500M2 3v9M6 3v9M10 3v9" /></Ico>Columns</ShelfLabel>
            <ShelfPills>
              {['SUM(Area)', 'SUM(Zero Line)', 'SUM(Production)', 'SUM(Production)'].map((t, i) => <Pill key={i} $w={126}>{t}</Pill>)}
            </ShelfPills>
          </Shelf>
          <Shelf>
            <ShelfLabel><Ico w={12} h={10} sw={1.500} stroke="#555"><path d="M0 1h2M3.500 1H12M0 5h2M3.500 5H12M0 9h2M3.500 9H12" /></Ico>Rows</ShelfLabel>
            <ShelfPills><Pill $w={126} $c={BLUE}>State<Ico w={12} h={10} sw={2} stroke="#fff"><path d="M0 1h11M0 5h7M0 9h3" /></Ico></Pill></ShelfPills>
          </Shelf>
          <Worksheet />
        </Center>
        <DataGuide />
      </Work>
      <Bottom />
    </App_>
  );
}
